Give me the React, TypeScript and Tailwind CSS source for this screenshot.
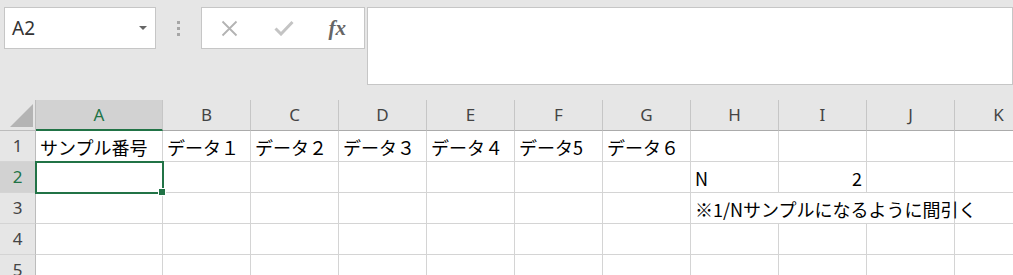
import React from 'react';

const COLS = ['A', 'B', 'C', 'D', 'E', 'F', 'G', 'H', 'I', 'J', 'K'];
const cellFont = { fontFamily: '"Noto Sans CJK JP", "Noto Sans", sans-serif' };
const hdrFont = { fontFamily: '"Noto Sans", "Open Sans", sans-serif' };

type Cell = { text: string; align?: 'right'; overflow?: boolean };

const DATA: Record<number, Record<string, Cell>> = {
  1: {
    A: { text: 'サンプル番号' },
    B: { text: 'データ１' },
    C: { text: 'データ２' },
    D: { text: 'データ３' },
    E: { text: 'データ４' },
    F: { text: 'データ5' },
    G: { text: 'データ６' },
  },
  2: {
    H: { text: 'N' },
    I: { text: '2', align: 'right' },
  },
  3: {
    H: { text: '※1/Nサンプルになるように間引く', overflow: true },
  },
};

const colW = (c: string) => (c === 'A' ? 'w-[127px]' : 'w-[88px]');

export default function App() {
  return (
    <div className="w-[1013px] h-[275px] overflow-hidden bg-[#e6e6e6] select-none">
      {/* Formula bar */}
      <div className="h-[100px] flex items-start pt-[7px] pl-[4px]">
        <div className="w-[152px] h-[42px] bg-white border border-[#c6c6c6] flex items-center pl-[7px] pr-[8px]">
          <span className="text-[19px] text-[#333] flex-1" style={hdrFont}>A2</span>
          <svg width="8" height="4" viewBox="0 0 8 4"><path d="M0 0h8L4 4z" fill="#666" /></svg>
        </div>
        <div className="w-[45px] h-[42px] flex flex-col items-center justify-center gap-[3px]">
          <div className="w-[3px] h-[3px] bg-[#a6a6a6]" />
          <div className="w-[3px] h-[3px] bg-[#a6a6a6]" />
          <div className="w-[3px] h-[3px] bg-[#a6a6a6]" />
        </div>
        <div className="w-[164px] h-[42px] bg-white border border-[#c6c6c6] flex items-center">
          <div className="w-[54px] flex justify-center ml-[1px]">
            <svg width="17" height="17" viewBox="0 0 17 17">
              <path d="M1.5 1.5l14 14M15.5 1.5l-14 14" stroke="#b3b3b3" strokeWidth="1.8" fill="none" />
            </svg>
          </div>
          <div className="w-[54px] flex justify-center">
            <svg width="20" height="16" viewBox="0 0 20 16">
              <path d="M1.5 8.5l5.5 5.5L18.5 2" stroke="#c4c4c4" strokeWidth="3" fill="none" />
            </svg>
          </div>
          <div className="w-[54px] flex justify-center">
            <span className="text-[21px] italic font-bold text-[#666] leading-none" style={{ fontFamily: '"Liberation Serif", serif' }}>fx</span>
          </div>
        </div>
        <div className="ml-[2px] flex-1 h-[78px] bg-white border border-[#c6c6c6]" />
      </div>

      {/* Column headers */}
      <div className="flex h-[31px]">
        <div className="w-[36px] shrink-0 h-full border-r border-b border-[#bcbcbc] relative">
          <svg className="absolute left-[10px] top-[4px]" width="23" height="23" viewBox="0 0 23 23">
            <path d="M0 23H23V0z" fill="#b4b4b4" />
          </svg>
        </div>
        {COLS.map((c) => (
          <div
            key={c}
            className={`${colW(c)} shrink-0 h-full border-r border-[#c6c6c6] flex items-center justify-center text-[17px] ${
              c === 'A' ? 'bg-[#d2d2d2] border-b-2 border-b-[#217346] text-[#217346]' : 'border-b border-b-[#ababab] text-[#444]'
            }`}
            style={hdrFont}
          >
            {c}
          </div>
        ))}
      </div>

      {/* Rows */}
      {[1, 2, 3, 4, 5].map((r) => (
        <div key={r} className="flex h-[31px]">
          <div
            className={`w-[36px] shrink-0 h-full border-r border-b border-r-[#bcbcbc] border-b-[#d4d4d4] flex items-center justify-center text-[17px] ${
              r === 2 ? 'bg-[#d2d2d2] text-[#217346]' : 'text-[#444]'
            }`}
            style={hdrFont}
          >
            {r}
          </div>
          {COLS.map((c) => {
            const cell = DATA[r]?.[c];
            const hideRight = r === 3 && (c === 'H' || c === 'I');
            return (
              <div
                key={c}
                className={`${colW(c)} shrink-0 h-full bg-white border-b border-[#d4d4d4] relative flex items-center ${
                  hideRight ? 'border-r-0 pr-[1px]' : 'border-r'
                } ${cell?.align === 'right' ? 'justify-end pr-[4px]' : 'pl-[4px]'}`}
              >
                {cell && (
                  <span
                    className={`text-[18px] text-black leading-none pt-[2px] ${cell.overflow ? 'whitespace-nowrap absolute left-[4px] z-10' : ''}`}
                    style={cellFont}
                  >
                    {cell.text}
                  </span>
                )}
                {r === 2 && c === 'A' && (
                  <>
                    <div className="absolute -left-[1px] -top-[1px] w-[129px] h-[33px] border-2 border-[#217346] z-10" />
                    <div className="absolute left-[122px] top-[26px] w-[8px] h-[8px] bg-[#217346] border border-white z-20" />
                  </>
                )}
              </div>
            );
          })}
        </div>
      ))}
    </div>
  );
}
